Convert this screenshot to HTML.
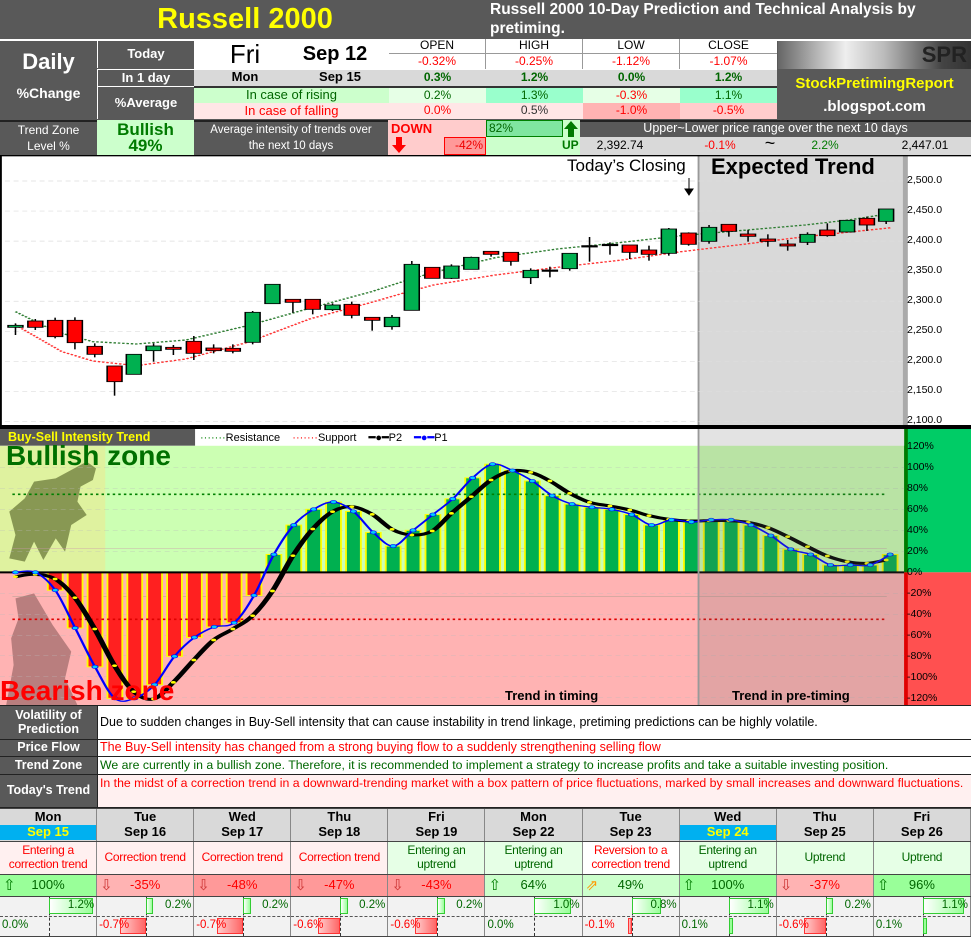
<!DOCTYPE html>
<html><head><meta charset="utf-8">
<style>
*{margin:0;padding:0;box-sizing:border-box}
body{width:971px;height:937px;position:relative;background:#fff;font-family:"Liberation Sans Narrow","Liberation Sans",sans-serif;overflow:hidden}
.c{position:absolute;display:flex;align-items:center;justify-content:center;text-align:center;line-height:1.1}
.g{background:#595959;color:#fff;font-weight:bold}
svg{position:absolute;left:0}
.row{position:absolute;left:0;width:971px;display:flex}
.row>div{width:97.1px;flex:none;border-right:1px solid #888;display:flex;align-items:center;justify-content:center;text-align:center;position:relative;line-height:1.15}
</style></head><body>

<!-- Title -->
<div class="c g" style="left:0;top:0;width:971px;height:39px;"></div>
<div class="c" style="left:100px;top:0;width:290px;height:39px;color:#ff0;font-weight:bold;font-size:29px;font-family:'Liberation Sans',sans-serif">Russell 2000</div>
<div style="position:absolute;left:490px;top:0;width:470px;color:#fff;font-weight:bold;font-size:15.5px;line-height:19px;font-family:'Liberation Sans',sans-serif">Russell 2000 10-Day Prediction and Technical Analysis by pretiming.</div>

<!-- header block -->
<div class="c g" style="left:0;top:39px;width:971px;height:81px;border-top:2px solid #fff"></div>
<div class="c" style="left:0;top:44px;width:97px;height:36px;color:#fff;font-weight:bold;font-size:22px">Daily</div>
<div class="c" style="left:0;top:82px;width:97px;height:24px;color:#fff;font-weight:bold;font-size:14px">%Change</div>
<div class="c" style="left:97px;top:41px;width:97px;height:27px;color:#fff;font-weight:bold;font-size:13px;border-left:1px solid #fff">Today</div>
<div class="c" style="left:97px;top:69px;width:97px;height:17px;color:#fff;font-weight:bold;font-size:13px;border-left:1px solid #fff;border-top:1px solid #fff">In 1 day</div>
<div class="c" style="left:97px;top:86px;width:97px;height:33px;color:#fff;font-weight:bold;font-size:13px;border-left:1px solid #fff;border-top:1px solid #fff">%Average</div>
<div class="c" style="left:194px;top:41px;width:195px;height:28px;background:#fff"></div>
<div class="c" style="left:215px;top:39px;width:60px;height:30px;font-size:26px">Fri</div>
<div class="c" style="left:290px;top:39px;width:90px;height:30px;font-size:20px;font-weight:bold">Sep 12</div>
<div class="c" style="left:389px;top:41px;width:388px;height:28px;background:#fff"></div>
<div class="c" style="left:389px;top:39px;width:97px;height:15px;font-size:12px;border-right:1px solid #999;border-bottom:1px solid #999">OPEN</div>
<div class="c" style="left:486px;top:39px;width:97px;height:15px;font-size:12px;border-right:1px solid #999;border-bottom:1px solid #999">HIGH</div>
<div class="c" style="left:583px;top:39px;width:97px;height:15px;font-size:12px;border-right:1px solid #999;border-bottom:1px solid #999">LOW</div>
<div class="c" style="left:680px;top:39px;width:97px;height:15px;font-size:12px;border-bottom:1px solid #999">CLOSE</div>
<div class="c" style="left:389px;top:54px;width:97px;height:15px;font-size:12px;color:#f00;border-right:1px solid #999">-0.32%</div>
<div class="c" style="left:486px;top:54px;width:97px;height:15px;font-size:12px;color:#f00;border-right:1px solid #999">-0.25%</div>
<div class="c" style="left:583px;top:54px;width:97px;height:15px;font-size:12px;color:#f00;border-right:1px solid #999">-1.12%</div>
<div class="c" style="left:680px;top:54px;width:97px;height:15px;font-size:12px;color:#f00">-1.07%</div>
<!-- In 1 day -->
<div class="c" style="left:194px;top:69px;width:583px;height:17px;background:#d9d9d9;border-top:1px solid #fff"></div>
<div class="c" style="left:215px;top:69px;width:60px;height:17px;font-size:13px;font-weight:bold">Mon</div>
<div class="c" style="left:300px;top:69px;width:80px;height:17px;font-size:13px;font-weight:bold">Sep 15</div>
<div class="c" style="left:389px;top:69px;width:97px;height:17px;font-size:12px;color:#006600;font-weight:bold">0.3%</div>
<div class="c" style="left:486px;top:69px;width:97px;height:17px;font-size:12px;color:#006600;font-weight:bold">1.2%</div>
<div class="c" style="left:583px;top:69px;width:97px;height:17px;font-size:12px;color:#006600;font-weight:bold">0.0%</div>
<div class="c" style="left:680px;top:69px;width:97px;height:17px;font-size:12px;color:#006600;font-weight:bold">1.2%</div>
<!-- rising -->
<div class="c" style="left:194px;top:86px;width:195px;height:17px;background:#ccffcc;color:#006600;font-size:13px;border-top:2px solid #333">In case of rising</div>
<div class="c" style="left:389px;top:86px;width:97px;height:17px;background:#e6ffe6;color:#006600;font-size:12px;border-top:2px solid #333">0.2%</div>
<div class="c" style="left:486px;top:86px;width:97px;height:17px;background:#99ffcc;color:#006600;font-size:12px;border-top:2px solid #333">1.3%</div>
<div class="c" style="left:583px;top:86px;width:97px;height:17px;background:#e6ffe6;color:#f00;font-size:12px;border-top:2px solid #333">-0.3%</div>
<div class="c" style="left:680px;top:86px;width:97px;height:17px;background:#99ffcc;color:#006600;font-size:12px;border-top:2px solid #333">1.1%</div>
<!-- falling -->
<div class="c" style="left:194px;top:103px;width:195px;height:16px;background:#ffe6e6;color:#f00;font-size:13px">In case of falling</div>
<div class="c" style="left:389px;top:103px;width:97px;height:16px;background:#ffe6e6;color:#f00;font-size:12px">0.0%</div>
<div class="c" style="left:486px;top:103px;width:97px;height:16px;background:#ffe6e6;color:#333;font-size:12px">0.5%</div>
<div class="c" style="left:583px;top:103px;width:97px;height:16px;background:#ffb3b3;color:#f00;font-size:12px">-1.0%</div>
<div class="c" style="left:680px;top:103px;width:97px;height:16px;background:#ffcccc;color:#f00;font-size:12px">-0.5%</div>
<!-- logo -->
<div class="c" style="left:778px;top:41px;width:193px;height:28px;background:linear-gradient(90deg,#666,#eee 35%,#bbb 55%,#444 85%,#333);justify-content:flex-end;padding-right:4px;color:#222;font-weight:bold;font-size:22px">SPR</div>
<div class="c" style="left:778px;top:72px;width:193px;height:24px;color:#ff0;font-weight:bold;font-size:15px">StockPretimingReport</div>
<div class="c" style="left:778px;top:96px;width:193px;height:22px;color:#fff;font-weight:bold;font-size:15px">.blogspot.com</div>

<!-- trend zone row -->
<div class="c g" style="left:0;top:120px;width:971px;height:35px;border-top:2px solid #222"></div>
<div class="c" style="left:0;top:120px;width:97px;height:35px;color:#fff;font-size:12px;line-height:16px">Trend Zone<br>Level %</div>
<div class="c" style="left:97px;top:120px;width:97px;height:35px;background:#ccffcc;color:#007a00;font-weight:bold;font-size:17px;line-height:16px">Bullish<br>49%</div>
<div class="c" style="left:194px;top:120px;width:194px;height:35px;color:#fff;font-size:11.5px;line-height:16px">Average intensity of trends over<br>the next 10 days</div>
<div class="c" style="left:388px;top:120px;width:98px;height:35px;background:#ffcccc"></div>
<div style="position:absolute;left:391px;top:121px;color:#f00;font-weight:bold;font-size:13px;font-family:'Liberation Sans',sans-serif">DOWN</div>
<svg style="left:392px;top:137px" width="14" height="16"><path d="M4 0h6v8h4l-7 8-7-8h4z" fill="#f00"/></svg>
<div class="c" style="left:444px;top:137px;width:42px;height:18px;background:#ff9999;border:1px solid #f00;color:#e00;font-size:12px;justify-content:flex-end;padding-right:2px">-42%</div>
<div class="c" style="left:486px;top:120px;width:94px;height:35px;background:#ccffcc"></div>
<div class="c" style="left:486px;top:120px;width:77px;height:17px;background:#80e6a0;border:1px solid #008000;color:#006600;font-size:12px;justify-content:flex-start;padding-left:2px">82%</div>
<svg style="left:564px;top:121px" width="14" height="16"><path d="M7 0l7 8h-4v8h-6v-8h-4z" fill="#007a00"/></svg>
<div style="position:absolute;left:562px;top:138px;color:#007a00;font-size:12px;font-weight:bold">UP</div>
<div class="c" style="left:580px;top:120px;width:391px;height:17px;color:#fff;font-size:12.5px">Upper~Lower price range over the next 10 days</div>
<div class="c" style="left:580px;top:137px;width:391px;height:18px;background:#d9d9d9"></div>
<div class="c" style="left:590px;top:137px;width:60px;height:18px;font-size:12px">2,392.74</div>
<div class="c" style="left:700px;top:137px;width:40px;height:18px;font-size:12px;color:#f00">-0.1%</div>
<div class="c" style="left:755px;top:135px;width:30px;height:18px;font-size:18px">~</div>
<div class="c" style="left:805px;top:137px;width:40px;height:18px;font-size:12px;color:#007a00">2.2%</div>
<div class="c" style="left:890px;top:137px;width:70px;height:18px;font-size:12px">2,447.01</div>

<!-- price chart -->
<svg id="pc" style="top:155px" width="971" height="275" viewBox="0 0 1568 825" preserveAspectRatio="none">
<rect x="0" y="0" width="1568" height="825" fill="#fff"/>
<rect x="1128" y="0" width="332" height="825" fill="#d9d9d9"/>
<line x1="1128" y1="0" x2="1128" y2="825" stroke="#999" stroke-width="3"/>
<rect x="1458" y="0" width="8" height="825" fill="#aaa"/>
<rect x="0" y="0" width="3" height="825" fill="#000"/>
<rect x="0" y="0" width="1568" height="4" fill="#000"/>
<g id="pcg"></g>
</svg>
<div style="position:absolute;left:567px;top:156px;font-size:17px">Today’s Closing</div>
<svg style="left:684px;top:178px" width="10" height="18"><path d="M5 0v12M1 11l4 6 4-6z" stroke="#000" fill="#000"/></svg>
<div style="position:absolute;left:711px;top:154px;font-size:22px;font-weight:bold;font-family:'Liberation Sans',sans-serif">Expected Trend</div>
<div style="position:absolute;left:907px;top:165px;font-size:10.5px;line-height:30px">2,500.0<br>2,450.0<br>2,400.0<br>2,350.0<br>2,300.0<br>2,250.0<br>2,200.0<br>2,150.0<br>2,100.0</div>

<!-- intensity chart -->
<svg id="ic" style="top:425px" width="971" height="280" viewBox="0 0 1568 840" preserveAspectRatio="none">
<rect x="0" y="0" width="1568" height="840" fill="#fff"/>
<rect x="0" y="62" width="1460" height="380" fill="#ccffb3"/>
<rect x="0" y="442" width="1460" height="398" fill="#ffb3b3"/>
<rect x="0" y="62" width="170" height="380" fill="#e4ef9a" opacity="0.8"/>
<path d="M15 400 L25 330 L15 260 L40 220 L55 170 L90 160 L115 135 L140 110 L155 130 L150 165 L130 185 L125 230 L140 270 L115 300 L105 380 L90 340 L70 405 L55 350 L40 410Z" fill="#6b7a3a" opacity="0.75"/>
<path d="M10 840 L22 720 L18 640 L30 580 L25 520 L55 505 L85 600 L115 680 L105 760 L125 840Z" fill="#8a5a5a" opacity="0.6"/>
<rect x="1460" y="0" width="108" height="442" fill="#00cc66"/>
<rect x="1460" y="442" width="108" height="398" fill="#ff5050"/>
<rect x="1460" y="0" width="6" height="442" fill="#007a00"/>
<rect x="1460" y="442" width="6" height="398" fill="#e00000"/>
<rect x="0" y="0" width="1568" height="12" fill="#000"/>
<rect x="0" y="12" width="1460" height="50" fill="#fff"/>
<rect x="0" y="12" width="315" height="50" fill="#595959"/>
<g id="icg"></g>
<rect x="1128" y="12" width="332" height="828" fill="#666" opacity="0.18"/>
<line x1="1128" y1="12" x2="1128" y2="840" stroke="#999" stroke-width="3"/>
</svg>
<div style="position:absolute;left:8px;top:430px;color:#ff0;font-weight:bold;font-size:12.5px">Buy-Sell Intensity Trend</div>
<div style="position:absolute;left:200px;top:431px;font-size:11px;color:#000;white-space:pre"><span style="color:#008000">·······</span>Resistance    <span style="color:#f00">·······</span>Support    <b>━●━</b>P2    <b style="color:#00f">━●━</b>P1</div>
<div style="position:absolute;left:6px;top:440px;color:#007000;font-weight:bold;font-size:28px;font-family:'Liberation Sans',sans-serif">Bullish zone</div>
<div style="position:absolute;left:0;top:675px;color:#f00;font-weight:bold;font-size:28px;font-family:'Liberation Sans',sans-serif">Bearish zone</div>
<div style="position:absolute;left:505px;top:688px;font-weight:bold;font-size:13px">Trend in timing</div>
<div style="position:absolute;left:732px;top:688px;font-weight:bold;font-size:13px">Trend in pre-timing</div>
<div style="position:absolute;left:907px;top:436px;font-size:10.5px;line-height:21px">120%<br>100%<br>80%<br>60%<br>40%<br>20%<br>0%<br>-20%<br>-40%<br>-60%<br>-80%<br>-100%<br>-120%</div>

<!-- text table -->
<div style="position:absolute;left:0;top:705px;width:971px;height:103px;background:#222"></div>
<div class="c g" style="left:0;top:706px;width:97px;height:33px;font-size:12.5px">Volatility of<br>Prediction</div>
<div class="c" style="left:98px;top:706px;width:873px;height:33px;background:#fff;justify-content:flex-start;padding-left:2px;font-size:12.5px">Due to sudden changes in Buy-Sell intensity that can cause instability in trend linkage, pretiming predictions can be highly volatile.</div>
<div class="c g" style="left:0;top:740px;width:97px;height:16px;font-size:12.5px">Price Flow</div>
<div class="c" style="left:98px;top:740px;width:873px;height:16px;background:#fff;justify-content:flex-start;padding-left:2px;font-size:12.5px;color:#f00">The Buy-Sell intensity has changed from a strong buying flow to a suddenly strengthening selling flow</div>
<div class="c g" style="left:0;top:757px;width:97px;height:17px;font-size:12.5px">Trend Zone</div>
<div class="c" style="left:98px;top:757px;width:873px;height:17px;background:#fff;justify-content:flex-start;padding-left:2px;font-size:12.3px;color:#006600;white-space:nowrap">We are currently in a bullish zone. Therefore, it is recommended to implement a strategy to increase profits and take a suitable investing position.</div>
<div class="c g" style="left:0;top:775px;width:97px;height:32px;font-size:12.5px">Today's Trend</div>
<div class="c" style="left:98px;top:775px;width:873px;height:32px;background:#fff0f0;justify-content:flex-start;align-items:flex-start;text-align:left;padding-left:2px;font-size:12.3px;color:#f00;line-height:16px">In the midst of a correction trend in a downward-trending market with a box pattern of price fluctuations, marked by small increases and downward fluctuations.</div>

<!-- bottom table -->
<div style="position:absolute;left:0;top:808px;width:971px;height:129px;background:#444"></div>
<div class="row" style="top:809px;height:32px;background:#d9d9d9;font-weight:bold;font-size:13px" id="days"></div>
<div class="row" style="top:842px;height:32px;font-size:12px" id="trends"></div>
<div class="row" style="top:875px;height:21px;font-size:13px" id="pcts"></div>
<div class="row" style="top:897px;height:39px;background:#f2f2f2;font-size:11.5px" id="bars"></div>

<script>
var NS="http://www.w3.org/2000/svg";
function el(p,t,a){var e=document.createElementNS(NS,t);for(var k in a)e.setAttribute(k,a[k]);p.appendChild(e);return e;}
var g=document.getElementById("pcg");
for(var y=78;y<=800;y+=90.2){el(g,"line",{x1:8,x2:1458,y1:y,y2:y,stroke:"#ddd","stroke-width":2,"stroke-dasharray":"8 6"});}
function curve(pts,col){var d="M"+pts.map(function(p){return p.join(" ")}).join(" L");el(g,"path",{d:d,fill:"none",stroke:col,"stroke-width":4,"stroke-dasharray":"4 3"});}
curve([[25,470],[90,530],[150,560],[220,567],[300,555],[400,512],[500,460],[600,410],[650,380],[700,352],[800,308],[900,282],[1000,263],[1100,242],[1200,226],[1300,210],[1370,195],[1440,175]],"#2e7d32");
curve([[25,510],[100,590],[150,618],[220,632],[300,612],[400,562],[500,492],[600,442],[650,415],[700,390],[800,360],[900,337],[1000,316],[1100,290],[1200,268],[1300,245],[1440,218]],"#ff3333");
var C=[[25,511,517,505,540,"g"],[57,498,517,492,525,"r"],[89,496,545,488,550,"r"],[121,496,563,487,583,"r"],[153,574,598,565,607,"r"],[185,633,680,633,722,"r"],[216,598,658,598,658,"g"],[248,573,587,565,620,"g"],[280,577,583,570,600,"r"],[313,559,595,543,615,"r"],[345,579,587,568,595,"r"],[376,580,589,568,595,"r"],[408,472,562,468,568,"g"],[440,388,446,388,446,"g"],[473,433,442,433,473,"r"],[505,433,463,433,478,"r"],[537,450,464,445,468,"g"],[568,448,481,440,490,"r"],[601,487,496,487,527,"r"],[633,487,515,480,524,"g"],[665,328,466,318,466,"g"],[698,337,370,337,370,"r"],[729,333,370,328,372,"g"],[761,307,343,305,343,"g"],[793,289,298,289,305,"r"],[825,292,319,292,332,"r"],[857,346,368,340,387,"g"],[888,345,349,335,367,"k"],[920,295,341,295,347,"g"],[952,272,276,246,320,"k"],[985,268,271,262,299,"k"],[1017,270,292,270,312,"r"],[1048,285,298,272,317,"r"],[1080,222,295,219,302,"g"],[1112,234,268,232,272,"r"],[1145,217,259,210,266,"g"],[1177,208,229,208,245,"r"],[1208,237,244,225,260,"r"],[1240,252,259,238,275,"r"],[1272,267,273,255,287,"r"],[1304,238,262,232,270,"g"],[1336,225,242,205,245,"r"],[1368,196,231,196,231,"g"],[1400,190,210,185,228,"r"],[1431,162,199,162,207,"g"]];
C.forEach(function(c){el(g,"line",{x1:c[0],x2:c[0],y1:c[3],y2:c[4],stroke:"#000","stroke-width":2.5});
var f=c[5]=="g"?"#00b050":c[5]=="r"?"#ff0000":"#000";el(g,"rect",{x:c[0]-12,y:c[1],width:24,height:Math.max(c[2]-c[1],4),fill:f,stroke:"#000","stroke-width":2.5});});
var h=document.getElementById("icg");
[128,190,253,316,379,505,568,631,692,755,817].forEach(function(y){el(h,"line",{x1:0,x2:1460,y1:y,y2:y,stroke:"#bbb","stroke-width":1.5,"stroke-dasharray":"8 6",opacity:.6});});
el(h,"line",{x1:20,x2:1432,y1:370,y2:370,stroke:"#c9a",opacity:.6,"stroke-width":2});
el(h,"line",{x1:20,x2:1432,y1:515,y2:515,stroke:"#998",opacity:.6,"stroke-width":2});
var V=[0,0,-17,-53,-90,-120,-120,-107,-80,-62,-52,-48,-22,17,45,60,67,58,38,25,40,55,70,90,103,97,87,73,65,62,60,55,45,50,48,50,50,45,35,22,17,7,7,7,17];
var pts=[];
V.forEach(function(v,i){var x=25+32.1*i,y=442-v*3.15;pts.push([x,y]);
if(v!=0){el(h,"rect",{x:x-12,y:Math.min(y,442),width:24,height:Math.abs(442-y),fill:v>0?"#00b050":"#ff2020",stroke:"#ff0","stroke-width":3});}});
el(h,"line",{x1:20,x2:1432,y1:208,y2:208,stroke:"#008000","stroke-width":5,"stroke-dasharray":"4 5"});
el(h,"line",{x1:20,x2:1432,y1:583,y2:583,stroke:"#d00","stroke-width":5,"stroke-dasharray":"4 5"});
el(h,"line",{x1:0,x2:1460,y1:442,y2:442,stroke:"#000","stroke-width":6});
var P2=[[25,455],[57,448],[89,462],[121,518],[153,612],[185,722],[216,800],[248,822],[280,772],[313,705],[345,645],[376,612],[408,572],[440,498],[473,392],[505,312],[537,260],[568,245],[601,268],[633,313],[665,330],[698,318],[729,265],[761,215],[793,165],[825,138],[857,142],[888,168],[920,205],[952,232],[985,243],[1017,255],[1048,272],[1080,283],[1112,288],[1145,287],[1177,287],[1208,292],[1240,308],[1272,335],[1304,365],[1336,393],[1368,410],[1400,415],[1431,405]];
function smooth(p){var d="M"+p[0][0]+" "+p[0][1];for(var i=0;i<p.length-1;i++){var p0=p[i-1]||p[i],p1=p[i],p2=p[i+1],p3=p[i+2]||p2;
d+=" C"+(p1[0]+(p2[0]-p0[0])/6)+" "+(p1[1]+(p2[1]-p0[1])/6)+" "+(p2[0]-(p3[0]-p1[0])/6)+" "+(p2[1]-(p3[1]-p1[1])/6)+" "+p2[0]+" "+p2[1];}return d;}
el(h,"path",{d:smooth(P2),fill:"none",stroke:"#000","stroke-width":9});
P2.forEach(function(p){el(h,"circle",{cx:p[0],cy:p[1],r:4,fill:"#ff0"});});
el(h,"path",{d:smooth(pts),fill:"none",stroke:"#00f","stroke-width":4});
pts.forEach(function(p){el(h,"circle",{cx:p[0],cy:p[1],r:5,fill:"#0cf",stroke:"#00f","stroke-width":1.5});});
var D=[["Mon","Sep 15",1],["Tue","Sep 16"],["Wed","Sep 17"],["Thu","Sep 18"],["Fri","Sep 19"],["Mon","Sep 22"],["Tue","Sep 23"],["Wed","Sep 24",1],["Thu","Sep 25"],["Fri","Sep 26"]];
var T=[["Entering a correction trend",0],["Correction&nbsp;trend",0],["Correction&nbsp;trend",0],["Correction&nbsp;trend",0],["Entering an uptrend",1],["Entering an uptrend",1],["Reversion to a correction trend",0],["Entering an uptrend",1],["Uptrend",1],["Uptrend",1]];
var P=[[100,"#99ff99"],[-35,"#ffb3b3"],[-48,"#ff9999"],[-47,"#ff9999"],[-43,"#ff9999"],[64,"#ccffcc"],[49,"#ccffcc"],[100,"#99ff99"],[-37,"#ffb3b3"],[96,"#99ff99"]];
var U=[1.2,0.2,0.2,0.2,0.2,1.0,0.8,1.1,0.2,1.1],L=[0.0,-0.7,-0.7,-0.6,-0.6,0.0,-0.1,0.1,-0.6,0.1];
var dh="",th="",ph="",bh="";
D.forEach(function(d,i){
dh+='<div style="flex-direction:column"><div>'+d[0]+'</div><div style="width:100%;'+(d[2]?'background:#00b0f0;color:#ff0':'')+'">'+d[1]+'</div></div>';
var t=T[i];th+='<div style="padding:0 2px;letter-spacing:-0.3px;background:'+(t[1]?'#e6ffe6':(i==6?'#fff':'#fff0f0'))+';color:'+(t[1]?'#006600':'#f00')+'">'+t[0]+'</div>';
var p=P[i],up=p[0]>0,arrow=i==6?'<span style="color:#f90">⇗</span>':(up?'<span style="color:#007a00">⇧</span>':'<span style="color:#c33">⇩</span>');
ph+='<div style="background:'+p[1]+';color:'+(up?'#006600':'#f00')+'"><span style="position:absolute;left:3px;font-size:15px">'+arrow+'</span>'+p[0]+'%</div>';
var u=U[i],l=L[i],uw=Math.max(u*37,4),lw=Math.abs(l)*37;
bh+='<div style="display:block"><div style="position:absolute;left:49px;top:0;width:0;height:39px;border-left:1px dashed #333"></div><div style="position:absolute;left:0;top:19px;width:100%;border-top:1px dashed #555"></div>'+
'<div style="position:absolute;left:49px;top:1px;width:'+uw+'px;height:16px;background:linear-gradient(90deg,#fff,#9f9);border:1px solid #3c3"></div>'+
'<div style="position:absolute;right:2px;top:2px;color:#006600">'+u.toFixed(1)+'%</div>'+
(l<0?'<div style="position:absolute;left:'+(49-lw)+'px;top:21px;width:'+lw+'px;height:16px;background:linear-gradient(90deg,#fcc,#f66);border:1px solid #f33"></div>':(l>0?'<div style="position:absolute;left:49px;top:21px;width:4px;height:16px;background:#9f9;border:1px solid #3c3"></div>':''))+
'<div style="position:absolute;left:2px;top:22px;color:'+(l<0?'#f00':'#006600')+'">'+l.toFixed(1)+'%</div></div>';
});
document.getElementById("days").innerHTML=dh;document.getElementById("trends").innerHTML=th;document.getElementById("pcts").innerHTML=ph;document.getElementById("bars").innerHTML=bh;
</script>
</body></html>
